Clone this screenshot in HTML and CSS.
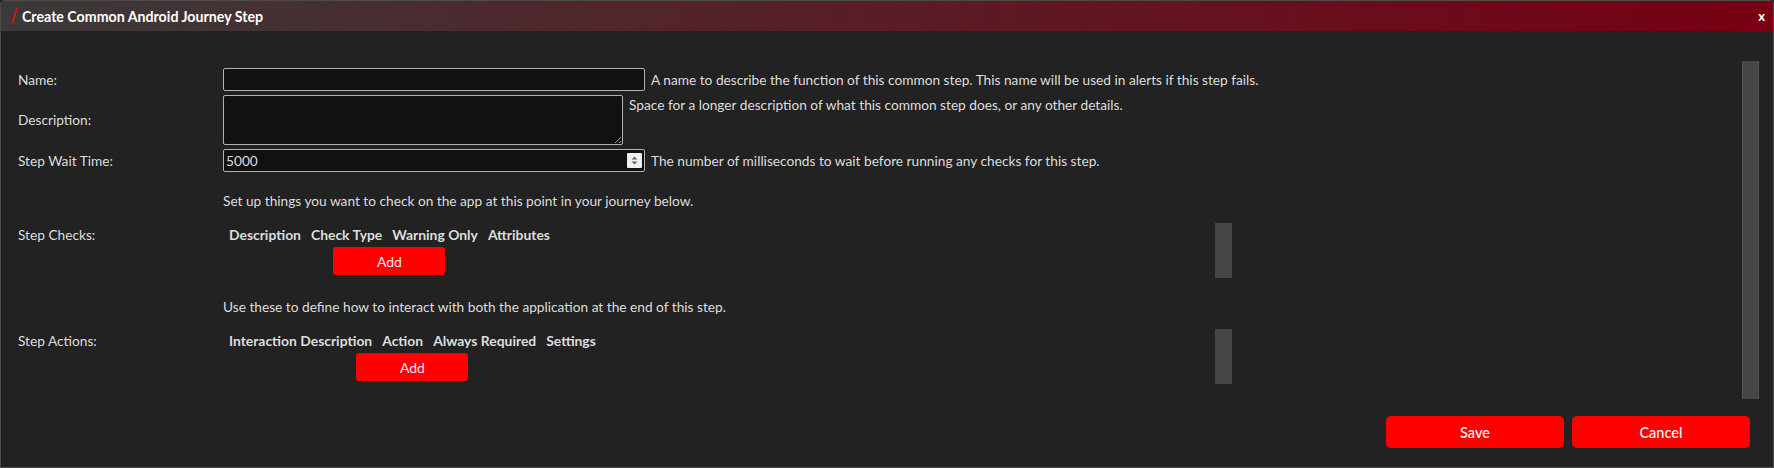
FILE: index.html
```html
<!DOCTYPE html>
<html lang="en">
<head>
<meta charset="utf-8">
<title>Create Common Android Journey Step</title>
<link rel="stylesheet" href="styles.css">
</head>
<body>
<div class="dialog">
  <div class="titlebar">
    <svg class="logo" width="8" height="18" viewBox="0 0 8 18"><line x1="1.6" y1="15.5" x2="5.8" y2="2" stroke="#e3101c" stroke-width="1.8" stroke-linecap="round"/></svg>
    <span class="title">Create Common Android Journey Step</span>
    <span class="close">x</span>
  </div>
  <div class="main">
    <div class="scroll">
      <div class="form">
        <div class="row row-name">
          <label class="label">Name:</label>
          <div class="field">
            <input class="text-input" type="text">
            <span class="help">A name to describe the function of this common step. This name will be used in alerts if this step fails.</span>
          </div>
        </div>
        <div class="row row-desc">
          <label class="label">Description:</label>
          <div class="field field-top">
            <textarea class="text-area"></textarea>
            <span class="help help-top">Space for a longer description of what this common step does, or any other details.</span>
          </div>
        </div>
        <div class="row row-wait">
          <label class="label">Step Wait Time:</label>
          <div class="field">
            <span class="num-wrap">
              <input class="text-input num-input" type="number" value="5000">
              <span class="spinner" aria-hidden="true">
                <svg width="15" height="15" viewBox="0 0 15 15"><path d="M4.5 6.5 L7.5 3.5 L10.5 6.5 Z" fill="#6b6b6b"/><path d="M4.5 8.5 L7.5 11.5 L10.5 8.5 Z" fill="#6b6b6b"/></svg>
              </span>
            </span>
            <span class="help">The number of milliseconds to wait before running any checks for this step.</span>
          </div>
        </div>
        <div class="note">Set up things you want to check on the app at this point in your journey below.</div>
        <div class="row row-table">
          <label class="label label-table">Step Checks:</label>
          <div class="grid-box">
            <div class="tbl-wrap">
              <table class="tbl">
                <thead>
                  <tr><th>Description</th><th>Check Type</th><th>Warning Only</th><th>Attributes</th></tr>
                </thead>
                <tbody>
                  <tr><td class="add-cell" colspan="4"><button class="btn btn-add">Add</button></td></tr>
                </tbody>
              </table>
            </div>
            <div class="tbl-track"></div>
          </div>
        </div>
        <div class="note">Use these to define how to interact with both the application at the end of this step.</div>
        <div class="row row-table">
          <label class="label label-table">Step Actions:</label>
          <div class="grid-box">
            <div class="tbl-wrap">
              <table class="tbl">
                <thead>
                  <tr><th>Interaction Description</th><th>Action</th><th>Always Required</th><th>Settings</th></tr>
                </thead>
                <tbody>
                  <tr><td class="add-cell" colspan="4"><button class="btn btn-add">Add</button></td></tr>
                </tbody>
              </table>
            </div>
            <div class="tbl-track"></div>
          </div>
        </div>
      </div>
      <div class="track"></div>
    </div>
    <div class="footer">
      <button class="btn btn-lg">Save</button>
      <button class="btn btn-lg">Cancel</button>
    </div>
  </div>
</div>
</body>
</html>
```
FILE: styles.css
```css
* {
  box-sizing: border-box;
}

html,
body {
  margin: 0;
  height: 100%;
}

body {
  background: #222222;
  font-family: Lato, "Open Sans", sans-serif;
  font-size: 13.7px;
  color: #dddddd;
}

.dialog {
  height: 468px;
  display: flex;
  flex-direction: column;
  border: 1px solid #4c4c4c;
  border-radius: 4px 4px 0 0;
  background: #222222;
  overflow: hidden;
}

.titlebar {
  height: 30px;
  flex: none;
  display: flex;
  align-items: center;
  padding: 0 8px 0 10px;
  background: linear-gradient(to right, #3b3939, #780012);
}

.logo {
  flex: none;
  margin-right: 3px;
}

.title {
  flex: 1;
  font-weight: 700;
  font-size: 14.2px;
  color: #ffffff;
}

.close {
  font-weight: 700;
  font-size: 13px;
  color: #ffffff;
  line-height: 1;
}

.main {
  flex: 1;
  display: flex;
  flex-direction: column;
  padding-top: 30px;
}

.scroll {
  height: 338px;
  flex: none;
  display: flex;
}

.form {
  flex: 1;
  padding: 7px 0 0 17px;
}

.track {
  width: 17px;
  flex: none;
  background: #464646;
  border-left: 1px solid #525252;
  border-right: 1px solid #525252;
  margin-right: 14px;
}

.row {
  display: flex;
  align-items: center;
}

.row-name,
.row-desc {
  margin-bottom: 4px;
}

.label {
  width: 205px;
  flex: none;
  line-height: 16px;
}

.field {
  display: flex;
  align-items: center;
}

.field-top {
  align-items: flex-start;
}

.text-input {
  width: 422px;
  height: 23px;
  margin: 0;
  background: #111111;
  border: 1px solid #b3b3b3;
  border-radius: 2px;
  color: #dddddd;
  font: inherit;
  padding: 1px 2px;
}

.num-wrap {
  position: relative;
  display: block;
}

.num-input {
  display: block;
  -moz-appearance: textfield;
}

.num-input::-webkit-inner-spin-button,
.num-input::-webkit-outer-spin-button {
  -webkit-appearance: none;
  margin: 0;
}

.spinner {
  position: absolute;
  top: 4px;
  right: 3px;
  width: 15px;
  height: 15px;
  background: #efefef;
  border-radius: 1px;
  display: block;
}

.spinner svg {
  display: block;
}

.text-area {
  width: 400px;
  height: 50px;
  margin: 0;
  background: #111111;
  border: 1px solid #b3b3b3;
  border-radius: 2px;
  color: #dddddd;
  font: inherit;
  padding: 2px;
}

.help {
  margin-left: 6px;
  line-height: 17px;
}

.help-top {
  margin-top: 1px;
}

.note {
  padding-left: 205px;
  line-height: 17px;
  margin: 20px 0 14px;
}

.row-table {
  align-items: flex-start;
}

.label-table {
  padding-top: 4px;
}

.grid-box {
  width: 1009px;
  height: 55px;
  display: flex;
}

.tbl-wrap {
  flex: 1;
}

.tbl-track {
  width: 17px;
  flex: none;
  background: #464646;
}

.tbl {
  border-spacing: 2px;
}

.tbl th {
  font-weight: 700;
  font-size: 13.9px;
  text-align: left;
  padding: 2px 4px;
  line-height: 16px;
  white-space: nowrap;
}

.add-cell {
  text-align: center;
  padding: 0;
}

.btn {
  background: #ff0000;
  color: #eeeeee;
  border: none;
  font-family: Lato, "Open Sans", sans-serif;
  cursor: pointer;
}

.btn-add {
  width: 112px;
  height: 28px;
  border-radius: 3px;
  font-size: 14px;
}

.footer {
  display: flex;
  justify-content: flex-end;
  gap: 8px;
  padding: 17px 23px 0 0;
}

.btn-lg {
  width: 178px;
  height: 32px;
  border-radius: 5px;
  font-size: 14.5px;
  font-weight: 600;
}
```
